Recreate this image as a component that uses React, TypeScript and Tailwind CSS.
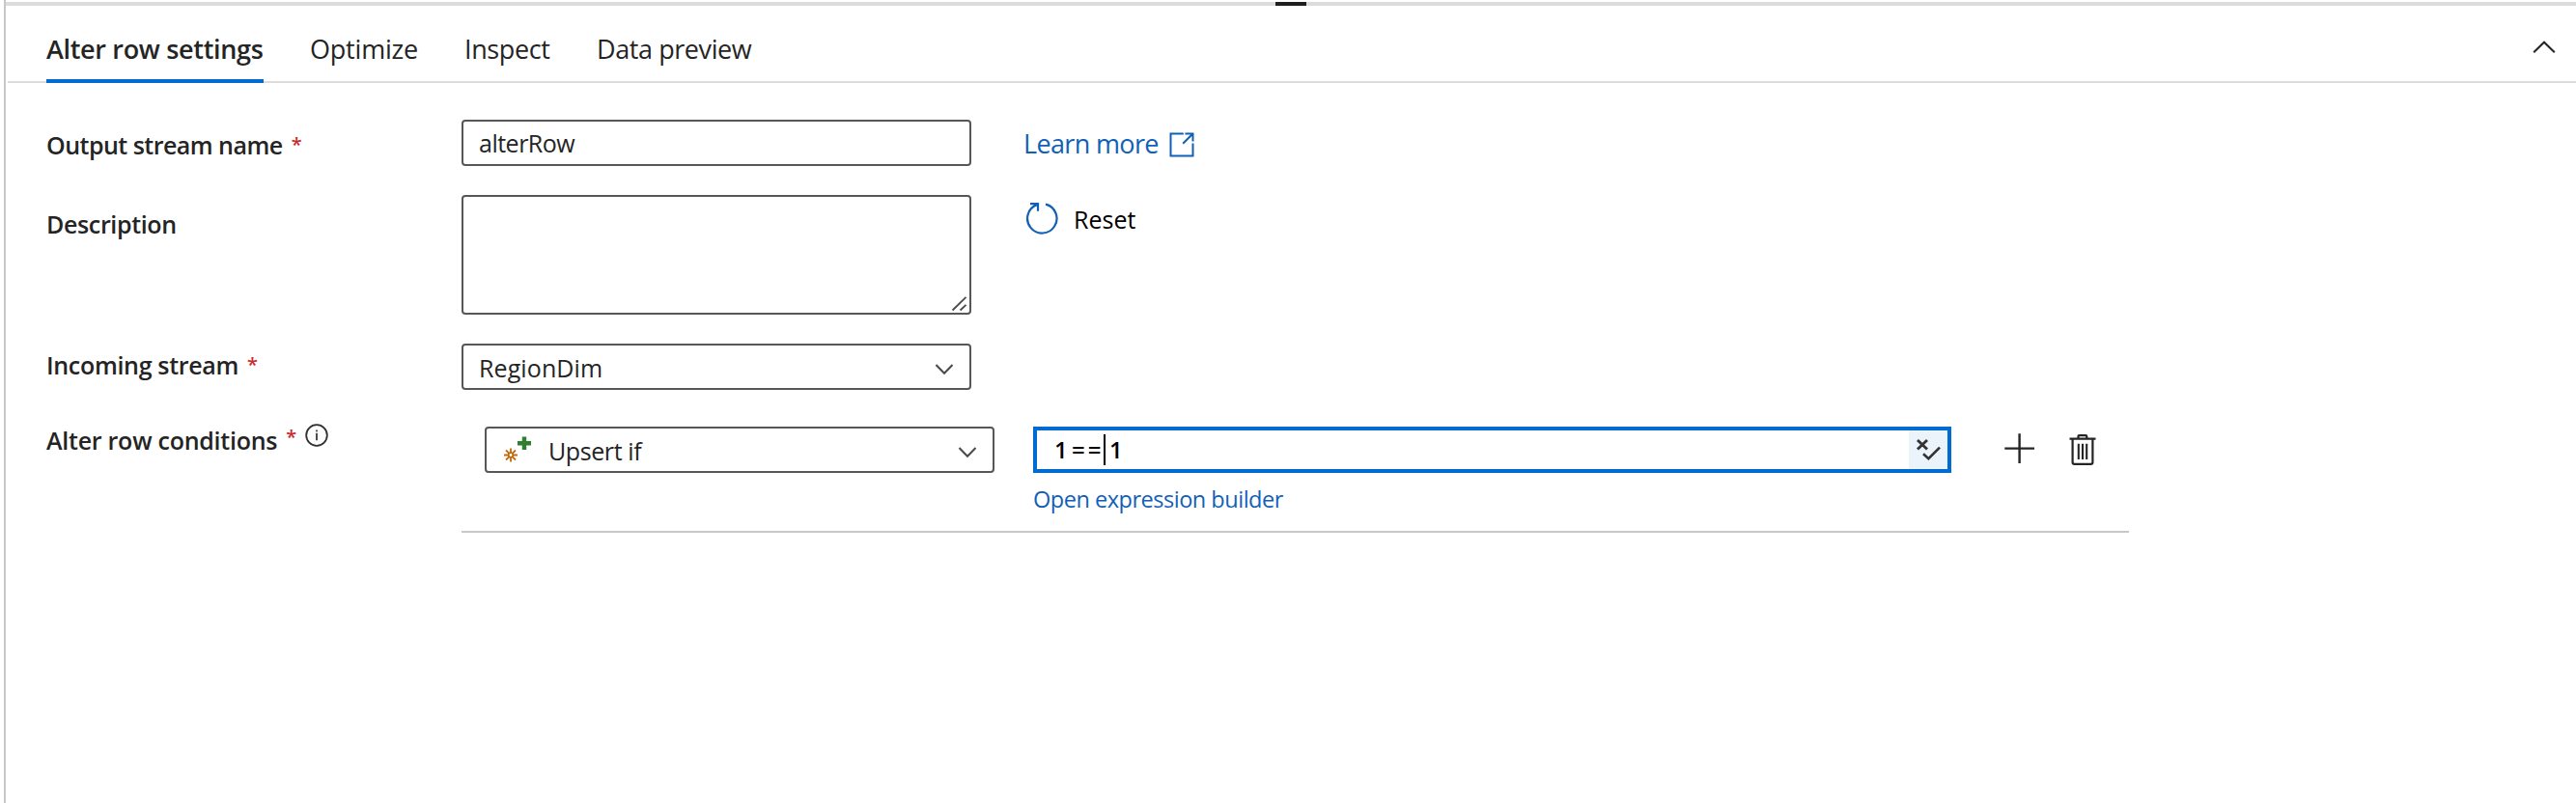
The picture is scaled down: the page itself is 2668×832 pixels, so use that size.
import React from "react";

const tabs = [
  { label: "Alter row settings", cls: "w-[225px] font-semibold tracking-[-0.32px] border-[#006cd2]" },
  { label: "Optimize", cls: "w-[112px] tracking-[-0.2px] border-transparent" },
  { label: "Inspect", cls: "w-[89px] tracking-[-0.4px] border-transparent" },
  { label: "Data preview", cls: "w-[162px] tracking-[-0.42px] border-transparent" },
];

function Star({ className = "" }: { className?: string }) {
  return <span className={`ml-[9px] text-[20px] font-semibold leading-8 tracking-normal text-[#cc2a2e] ${className}`}>*</span>;
}

function Label({ text, className = "", children }: { text: string; className?: string; children?: React.ReactNode }) {
  return (
    <div className={`flex w-[430px] shrink-0 items-start text-[25px] leading-8 font-semibold ${className}`}>
      <span>{text}</span>
      {children}
    </div>
  );
}

function Chevron() {
  return (
    <svg className="mt-[5px] ml-auto shrink-0" width="20" height="12" viewBox="0 0 20 12" fill="none" stroke="#4a4a4a" strokeWidth="2">
      <path d="M1.5 1 L10 9.8 L18.5 1" />
    </svg>
  );
}

function InfoIcon() {
  return (
    <svg className="mt-[-1px] ml-[9px] shrink-0" width="24" height="24" viewBox="0 0 24 24" fill="none" stroke="#303030">
      <circle cx="12" cy="12" r="10.8" strokeWidth="1.8" />
      <path d="M12 9.7V17.2M12 6.6V8.2" strokeWidth="1.7" />
    </svg>
  );
}

function ExternalIcon() {
  return (
    <svg className="shrink-0" width="26" height="26" viewBox="0 0 26 26" fill="none" stroke="#1160b7" strokeWidth="2">
      <path d="M14.8 1.5H1.5V24.5H24.5V11.5M16.4 1.5H24.5V9.6M14.2 11.8L24.2 1.8" />
    </svg>
  );
}

function ResetIcon() {
  return (
    <svg className="shrink-0" width="34" height="34" viewBox="0 0 34 34" fill="none" stroke="#1160b7" strokeWidth="2.2">
      <path d="M21 2.6A15.2 15.2 0 1 1 12 3.1M5 2.1H13V9.8" />
    </svg>
  );
}

function UpsertIcon() {
  return (
    <svg className="mr-[18px] shrink-0" width="28" height="28" viewBox="0 0 28 28" fill="none">
      <path d="M21 0.5V14M14 7.2H28" stroke="#2f7f2f" strokeWidth="4.4" />
      <path d="M7 12.5V17M7 22V26.5M0 19.5H4.5M9.5 19.5H14M2 14.5L5.2 17.7M8.8 21.3L12 24.5M12 14.5L8.8 17.7M5.2 21.3L2 24.5" stroke="#bd6c14" strokeWidth="1.8" />
      <circle cx="7" cy="19.5" r="2.3" stroke="#bd6c14" strokeWidth="1.7" />
    </svg>
  );
}

function ValidateIcon() {
  return (
    <svg width="26" height="24" viewBox="0 0 26 24" fill="none" stroke="#333" strokeWidth="2.6">
      <path d="M2 2L12 11.5M12 2L2 11.5" strokeWidth="2.9" />
      <path d="M8 16.2L13.4 21.2L25 9.6" />
    </svg>
  );
}

function TrashIcon() {
  return (
    <svg className="shrink-0" width="28" height="34" viewBox="0 0 28 34" fill="none" stroke="#242424" strokeWidth="2.2">
      <path d="M0.5 5.7H27.5M9.5 5.5V3.2Q9.5 2.1 10.6 2.1H17.2Q18.3 2.1 18.3 3.2V5.5" />
      <path d="M3.6 6V30Q3.6 31.9 5.5 31.9H22.5Q24.4 31.9 24.4 30V6" />
      <path d="M9.8 10.7V27M14 10.7V27M18.2 10.7V27" strokeWidth="2.1" />
    </svg>
  );
}

const box = "flex w-[528px] shrink-0 rounded-[4px] border-2 border-[#575757] bg-white";

export default function App() {
  return (
    <div className="flex h-[832px] w-[2668px] overflow-hidden bg-white pl-1 font-['Open_Sans','Noto_Sans',sans-serif] text-[#242424]">
      <div className="w-[2px] shrink-0 bg-[#c8c8c8]" />
      <main className="flex min-w-0 flex-1 flex-col pt-[2px]">
        <div className="flex h-1 shrink-0 bg-[#dcdcdc] pl-[1315px]">
          <div className="h-1 w-8 bg-[#1f1f1f]" />
        </div>

        <header className="ml-[2px] flex h-20 shrink-0 justify-between border-b-2 border-[#dcdcdc] pr-[21px] pl-10">
          <nav className="flex gap-12">
            {tabs.map((t) => (
              <div key={t.label} className={`h-20 border-b-4 pt-[25px] text-[27px] leading-10 whitespace-nowrap ${t.cls}`}>
                {t.label}
              </div>
            ))}
          </nav>
          <svg className="mt-9" width="24" height="14" viewBox="0 0 24 14" fill="none" stroke="#242424" strokeWidth="2.1">
            <path d="M1.2 12.2L12 1.8L22.8 12.2" />
          </svg>
        </header>

        <section className="flex flex-col pt-[38px] pl-[42px]">
          <div className="flex h-12">
            <Label text="Output stream name" className="pt-[10px] tracking-[-0.52px]">
              <Star />
            </Label>
            <div className={`${box} items-center pb-[1px] pl-4 text-[25px] leading-8 tracking-[-0.5px]`}>alterRow</div>
            <a className="ml-[54px] flex items-center gap-[11px] text-[27px] leading-8 tracking-[-0.65px] text-[#1160b7]">
              <span className="pt-[1px]">Learn more</span>
              <span className="pt-[3px]">
                <ExternalIcon />
              </span>
            </a>
          </div>

          <div className="mt-[30px] flex h-[124px]">
            <Label text="Description" className="pt-[14px] tracking-[-0.35px]" />
            <div className={`${box} items-end justify-end pr-[1px] pb-[1px]`}>
              <svg width="18" height="17" viewBox="0 0 18 17" fill="none" stroke="#4a4a4a" strokeWidth="1.8">
                <path d="M1.5 15.5L15.5 1.8M9.5 15.5L15.5 9.8" />
              </svg>
            </div>
            <div className="ml-[56px] flex items-start text-[25px] leading-8 text-black">
              <span className="mt-[7px]">
                <ResetIcon />
              </span>
              <span className="mt-[9px] ml-4">Reset</span>
            </div>
          </div>

          <div className="mt-[30px] flex h-12">
            <Label text="Incoming stream" className="pt-[6px] tracking-[-0.32px]">
              <Star />
            </Label>
            <div className={`${box} items-center pr-4 pl-4 text-[25px] leading-8 tracking-[0.1px]`}>
              <span className="pt-[2px]">RegionDim</span>
              <Chevron />
            </div>
          </div>

          <div className="mt-[38px] flex">
            <Label text="Alter row conditions" className="-mt-[2px] tracking-[-0.25px]">
              <Star className="-mt-[3px]" />
              <InfoIcon />
            </Label>
            <div className="flex h-[110px] w-[1727px] items-start border-b-2 border-[#c8c8c8] pl-6">
              <div className={`${box} h-12 items-center pr-4 pl-[18px] text-[25px] leading-8 tracking-[-0.4px]`}>
                <UpsertIcon />
                <span className="pt-[2px]">Upsert if</span>
                <Chevron />
              </div>
              <div className="ml-10 flex flex-col">
                <div className="flex h-12 w-[951px] justify-between border-4 border-[#006cd2] bg-white">
                  <div className="flex items-center pl-[18px] text-[24px] leading-8 font-semibold text-black">
                    <span className="w-[18px]">1</span>
                    <span className="w-[33px] tracking-[3px]">==</span>
                    <span className="h-8 w-[2px] bg-black" />
                    <span className="ml-[4px]">1</span>
                  </div>
                  <div className="flex w-10 items-center justify-center bg-[#ebf3fb]">
                    <ValidateIcon />
                  </div>
                </div>
                <a className="mt-[11px] text-[23.5px] leading-8 tracking-[-0.48px] text-[#1160b7]">Open expression builder</a>
              </div>
              <svg className="mt-[7px] ml-[55px] shrink-0" width="32" height="32" viewBox="0 0 32 32" fill="none" stroke="#242424" strokeWidth="2.4">
                <path d="M15.6 0.3V31M0.3 15.6H31" />
              </svg>
              <div className="mt-[7px] ml-[35px]">
                <TrashIcon />
              </div>
            </div>
          </div>
        </section>
      </main>
    </div>
  );
}
